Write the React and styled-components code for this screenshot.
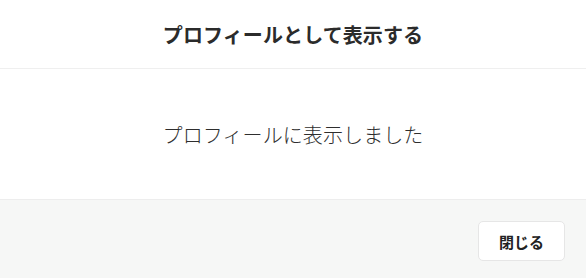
import React from "react";
import styled, { createGlobalStyle } from "styled-components";

const Global = createGlobalStyle`
  html, body { margin: 0; padding: 0; background: #fff; }
  body { font-family: "Noto Sans CJK JP", "Noto Sans", sans-serif; }
`;

const Dialog = styled.div`
  width: 586px;
  height: 278px;
  display: flex;
  flex-direction: column;
  background: #fff;
`;

const Header = styled.header`
  height: 68px;
  display: flex;
  align-items: center;
  justify-content: center;
  border-bottom: 1px solid #efefef;
`;

const Title = styled.h2`
  margin: 0;
  font-size: 20px;
  font-weight: 700;
  color: #2b2b2b;
  letter-spacing: 0.1px;
`;

const Body = styled.div`
  height: 130px;
  display: flex;
  align-items: center;
  justify-content: center;
  border-bottom: 1px solid #ededed;
`;

const Message = styled.p`
  margin: 0;
  font-size: 20px;
  font-weight: 300;
  color: #2e2e2e;
  letter-spacing: 0.1px;
`;

const Footer = styled.footer`
  flex: 1;
  display: flex;
  justify-content: flex-end;
  align-items: flex-start;
  padding: 21px 21px 0 0;
  background: #f6f7f6;
`;

const Button = styled.button`
  width: 87px;
  height: 40px;
  background: #fff;
  border: 1px solid #e6e6e6;
  border-radius: 5px;
  font-family: "Noto Sans CJK JP", "Noto Sans", sans-serif;
  font-size: 15px;
  font-weight: 700;
  color: #222;
  cursor: pointer;
`;

export default function App() {
  return (
    <>
      <Global />
      <Dialog>
        <Header>
          <Title>プロフィールとして表示する</Title>
        </Header>
        <Body>
          <Message>プロフィールに表示しました</Message>
        </Body>
        <Footer>
          <Button>閉じる</Button>
        </Footer>
      </Dialog>
    </>
  );
}
